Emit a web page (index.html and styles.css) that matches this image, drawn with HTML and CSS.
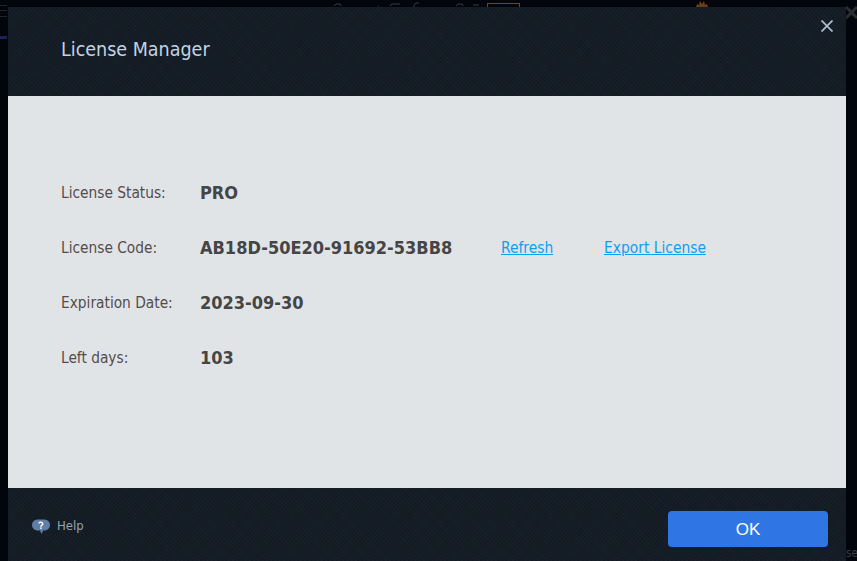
FILE: index.html
```html
<!DOCTYPE html>
<html lang="en">
<head>
<meta charset="utf-8">
<title>License Manager</title>
<link rel="stylesheet" href="styles.css">
</head>
<body>
<div class="backdrop" aria-hidden="true">
  <span class="bg-bar"></span>
  <span class="bg-line bg-line-1"></span>
  <span class="bg-line bg-line-2"></span>
  <span class="bg-line bg-line-3"></span>
  <svg class="bg-marks" width="150" height="7" viewBox="0 0 150 7"><path d="M2 6L4 4H8L9 6M46 6H47M58 6L60 4H68M82 7V5L84 3H87M124 6L126 4H130L131 6M141 5H147" stroke="#3a3d45" stroke-width="1" fill="none"/></svg>
  <span class="bg-box"></span>
  <svg class="bg-crown" width="12" height="6" viewBox="0 0 12 6"><path d="M0 6L1 3L3 4L4 0L6 3L8 0L9 4L11 3L12 6z" fill="#6e3c14"/></svg>
  <svg class="bg-x" width="11" height="13" viewBox="0 0 11 13"><path d="M0 1L11 12M11 1L0 12" stroke="#2b2d30" stroke-width="3" fill="none"/></svg>
  <span class="bg-se">se</span>
</div>
<section class="dialog">
  <header class="dialog-head">
    <h1 class="dialog-title">License Manager</h1>
    <button class="close" aria-label="Close">
      <svg width="12" height="12" viewBox="0 0 12 12"><path d="M0.5 0.5L11.500 11.500M11.500 0.5L0.5 11.500" stroke="#a9bccb" stroke-width="1.8" fill="none"/></svg>
    </button>
  </header>
  <main class="dialog-body">
    <div class="row"><span class="label">License Status:</span><span class="value">PRO</span></div>
    <div class="row"><span class="label">License Code:</span><span class="value code">AB18D-50E20-91692-53BB8</span><a class="link refresh" href="#">Refresh</a><a class="link" href="#">Export License</a></div>
    <div class="row"><span class="label">Expiration Date:</span><span class="value">2023-09-30</span></div>
    <div class="row"><span class="label">Left days:</span><span class="value">103</span></div>
  </main>
  <footer class="dialog-foot">
    <a class="help" href="#">
      <svg class="help-icon" width="18" height="16" viewBox="0 0 18 16"><path d="M6 0.500h6c3.300 0 6 2.200 6 5.500s-2.700 5.500-6 5.500h-0.800L9.500 15 8 11.500H6C2.700 11.500 0 9.300 0 6S2.700 0.500 6 0.500z" fill="#5f7fa8"/><path d="M6.800 4.400C7 2.900 10.600 2.700 10.800 4.700c0 1.400-1.900 1.400-1.900 3" stroke="#fff" stroke-width="1.400" fill="none"/><rect x="8.100" y="8.400" width="1.600" height="1.500" fill="#fff"/></svg>
      <span>Help</span>
    </a>
    <button class="ok">OK</button>
  </footer>
</section>
</body>
</html>
```
FILE: styles.css
```css
* { box-sizing: border-box; }
html, body { height: 100%; }
body {
  margin: 0;
  padding: 7px 11px 0 8px;
  background: #03050c;
  overflow: hidden;
  font-family: "DejaVu Sans Condensed", "DejaVu Sans", sans-serif;
}
.backdrop span, .backdrop svg { position: absolute; }
.bg-bar { left: 0; top: 36px; width: 7px; height: 3px; background: #1c2358; }
.bg-line { left: 0; width: 7px; height: 1px; background: #22252b; }
.bg-line-1 { top: 5px; }
.bg-line-2 { top: 10px; }
.bg-line-3 { top: 16px; }
.bg-marks { left: 332px; top: 0; }
.bg-box { left: 487px; top: 3px; width: 33px; height: 8px; border: 1px solid #6e4424; }
.bg-crown { left: 696px; top: 1px; }
.bg-x { left: 846px; top: 6px; }
.bg-se { left: 846px; top: 546px; font-size: 11.5px; line-height: 14px; color: #3a3d42; }
.dialog {
  position: relative;
  height: 554px;
  display: flex;
  flex-direction: column;
  background-color: #141c25;
  background-image: repeating-linear-gradient(45deg, rgba(255,255,255,.014) 0 1px, transparent 1px 3px), repeating-linear-gradient(-45deg, rgba(0,0,0,.09) 0 1px, transparent 1px 3px);
}
.dialog-head {
  height: 89px;
  padding: 30px 13px 0 53px;
  display: flex;
  justify-content: space-between;
  align-items: flex-start;
}
.dialog-title {
  margin: 0;
  font-size: 19.5px;
  line-height: 26px;
  font-weight: 400;
  color: #c3d3e6;
}
.close {
  margin: -17px 0 0;
  padding: 0;
  width: 12px;
  height: 12px;
  border: 0;
  background: none;
  display: flex;
}
.dialog-body {
  height: 392px;
  padding: 86px 0 0 53px;
  background: #e0e4e7;
  display: flex;
  flex-direction: column;
  gap: 33px;
}
.row {
  display: flex;
  align-items: center;
  height: 22px;
}
.label {
  width: 139px;
  font-size: 15.3px;
  color: #544c4c;
}
.value {
  font-size: 18px;
  font-weight: 700;
  color: #454545;
  margin-top: -2px;
}
.code { width: 301px; }
.link {
  font-size: 15.4px;
  color: #0ea0f0;
  text-decoration: underline;
}
.refresh { width: 103px; }
.dialog-foot {
  flex: 1;
  padding: 23px 18px 0 24px;
  display: flex;
  justify-content: space-between;
  align-items: flex-start;
}
.help {
  display: flex;
  align-items: center;
  gap: 7px;
  margin-top: 5px;
  color: #97a2ad;
  font-size: 13px;
  text-decoration: none;
}
.help-icon { flex: none; margin-top: 3px; }
.ok {
  width: 160px;
  height: 36px;
  padding: 2px 0 0;
  border: 0;
  border-radius: 4px;
  background: #2f76e4;
  color: #fff;
  font-family: "Liberation Sans", sans-serif;
  font-size: 17px;
}
```
